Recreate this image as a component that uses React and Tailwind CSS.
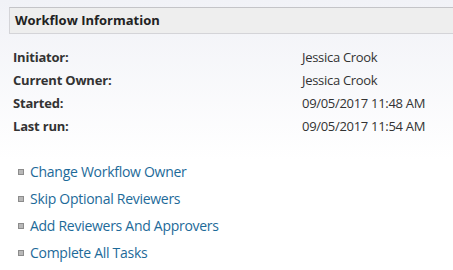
import React from "react";

const rows = [
  ["Initiator:", "Jessica Crook"],
  ["Current Owner:", "Jessica Crook"],
  ["Started:", "09/05/2017 11:48 AM"],
  ["Last run:", "09/05/2017 11:54 AM"],
];

const links = [
  "Change Workflow Owner",
  "Skip Optional Reviewers",
  "Add Reviewers And Approvers",
  "Complete All Tasks",
];

export default function App() {
  return (
    <div
      className="w-[453px] h-[270px] overflow-hidden bg-white"
      style={{ fontFamily: '"Open Sans", "DejaVu Sans", sans-serif' }}
    >
      <div className="bg-gradient-to-b from-[#f1f2f7] to-white pt-[7px] h-[160px]">
        <div className="ml-[9px] h-[27px] border-t border-b border-l border-t-[#c4c4c8] border-b-[#d4d4d8] border-l-[#d4d4d8] bg-[#eeeeee] flex items-center pl-[5px]">
          <span className="text-[13px] font-bold text-[#222]">Workflow Information</span>
        </div>
        <div className="pt-[12px] flex flex-col">
          {rows.map(([l, v]) => (
            <div key={l} className="flex h-[23px] items-center">
              <span className="w-[302px] pl-[13px] text-[13px] font-bold text-[#333] tracking-[-0.2px]">{l}</span>
              <span className="text-[13px] text-[#333] tracking-[-0.3px]">{v}</span>
            </div>
          ))}
        </div>
      </div>
      <div className="flex flex-col -mt-[2px]">
        {links.map((t) => (
          <div key={t} className="flex items-center h-[27px] pl-[18px]">
            <span className="w-[6px] h-[6px] bg-[#b8b8b8] border border-[#8c8c8c] mr-[6px]" />
            <span className="text-[14px] text-[#1d6a99] tracking-[-0.28px]">{t}</span>
          </div>
        ))}
      </div>
    </div>
  );
}
